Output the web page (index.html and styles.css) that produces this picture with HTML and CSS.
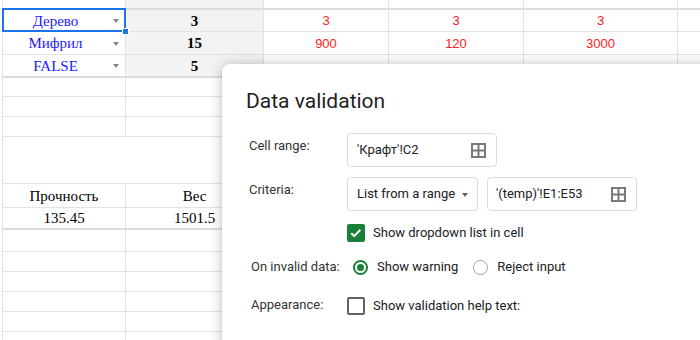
FILE: index.html
```html
<!DOCTYPE html>
<html>
<head>
<meta charset="utf-8">
<link rel="stylesheet" href="styles.css">
</head>
<body>
<div class="screen">
  <div class="sheet">
    <div class="c t"></div><div class="c t g"></div><div class="c t"></div><div class="c t"></div><div class="c t"></div><div class="c t"></div>

    <div class="c dd sel"><span class="val blue">Дерево</span><span class="arrow"></span><span class="handle"></span></div>
    <div class="c g b">3</div><div class="c red">3</div><div class="c red">3</div><div class="c red">3</div><div class="c"></div>

    <div class="c dd"><span class="val blue">Мифрил</span><span class="arrow"></span></div>
    <div class="c g b">15</div><div class="c red">900</div><div class="c red">120</div><div class="c red">3000</div><div class="c"></div>

    <div class="c dd t"><span class="val blue">FALSE</span><span class="arrow"></span></div>
    <div class="c g b t">5</div><div class="c t"></div><div class="c t"></div><div class="c t"></div><div class="c t"></div>

    <div class="c"></div><div class="c"></div><div class="c"></div><div class="c"></div><div class="c"></div><div class="c"></div>
    <div class="c"></div><div class="c"></div><div class="c"></div><div class="c"></div><div class="c"></div><div class="c"></div>
    <div class="c"></div><div class="c"></div><div class="c"></div><div class="c"></div><div class="c"></div><div class="c"></div>

    <div class="c n"></div><div class="c n"></div><div class="c n"></div><div class="c n"></div><div class="c n"></div><div class="c n"></div>

    <div class="c">Прочность</div><div class="c">Вес</div><div class="c"></div><div class="c"></div><div class="c"></div><div class="c"></div>
    <div class="c t">135.45</div><div class="c t">1501.5</div><div class="c t"></div><div class="c t"></div><div class="c t"></div><div class="c t"></div>

    <div class="c"></div><div class="c"></div><div class="c"></div><div class="c"></div><div class="c"></div><div class="c"></div>
    <div class="c"></div><div class="c"></div><div class="c"></div><div class="c"></div><div class="c"></div><div class="c"></div>
    <div class="c"></div><div class="c"></div><div class="c"></div><div class="c"></div><div class="c"></div><div class="c"></div>
    <div class="c"></div><div class="c"></div><div class="c"></div><div class="c"></div><div class="c"></div><div class="c"></div>
    <div class="c"></div><div class="c"></div><div class="c"></div><div class="c"></div><div class="c"></div><div class="c"></div>
    <div class="c"></div><div class="c"></div><div class="c"></div><div class="c"></div><div class="c"></div><div class="c"></div>
  </div>

  <div class="dialog">
    <div class="title">Data validation</div>
    <div class="form">
      <div class="label">Cell range:</div>
      <div class="ctrl">
        <div class="input w150">
          <span>'Крафт'!C2</span>
          <svg class="gicon" viewBox="0 0 15 15"><path fill-rule="evenodd" d="M0 0H15V15H0Z M2 2V6.5H6.5V2Z M8.5 2V6.5H13V2Z M2 8.5V13H6.5V8.5Z M8.5 8.5V13H13V8.5Z"/></svg>
        </div>
      </div>

      <div class="label r2">Criteria:</div>
      <div class="ctrl r2 pair">
        <div class="input sel-box">
          <span>List from a range</span>
          <span class="darrow"></span>
        </div>
        <div class="input w150 range">
          <span>'(temp)'!E1:E53</span>
          <svg class="gicon" viewBox="0 0 15 15"><path fill-rule="evenodd" d="M0 0H15V15H0Z M2 2V6.5H6.5V2Z M8.5 2V6.5H13V2Z M2 8.5V13H6.5V8.5Z M8.5 8.5V13H13V8.5Z"/></svg>
        </div>
      </div>

      <div class="label r3"></div>
      <div class="ctrl r3 opt">
        <span class="cb on"><svg viewBox="0 0 14 14"><path d="M2.3 7.2l2.9 2.9 6.1-6.3"/></svg></span>
        <span>Show dropdown list in cell</span>
      </div>

      <div class="label r4 ind">On invalid data:</div>
      <div class="ctrl r4 opt">
        <span class="rwrap"><span class="radio on"></span></span>
        <span>Show warning</span>
        <span class="rwrap second"><span class="radio"></span></span>
        <span>Reject input</span>
      </div>

      <div class="label r5 ind">Appearance:</div>
      <div class="ctrl r5 opt">
        <span class="cb"></span>
        <span>Show validation help text:</span>
      </div>
    </div>
  </div>
</div>
</body>
</html>
```
FILE: styles.css
```css
* { box-sizing: border-box; }
html, body { margin: 0; padding: 0; background: #fff; }
.screen {
  position: relative;
  width: 700px;
  height: 340px;
  overflow: hidden;
}
.sheet {
  margin-left: 2px;
  border-left: 1px solid #e2e2e2;
  display: grid;
  grid-template-columns: 123px 138px 125px 135px 154px 40px;
  grid-template-rows: 10px 22px 23px 23px 19px 20px 20px 47px 24px 22px 22px 20px 20px 20px 20px 20px;
  font-family: "Liberation Serif", "Times New Roman", serif;
  font-size: 15px;
  color: #000;
}
.c {
  border-right: 1px solid #e2e2e2;
  border-bottom: 1px solid #e2e2e2;
  display: flex;
  align-items: center;
  justify-content: center;
  line-height: 16px;
  white-space: nowrap;
  position: relative;
}
.c.t { border-bottom: 2px solid #dcdcdc; }
.c.n { border-right-color: transparent; }
.c.g { background: #f3f3f3; }
.c.b { font-weight: bold; }
.c.red {
  color: #ff1a1a;
  font-family: "Liberation Sans", Arial, sans-serif;
  font-size: 13px;
  padding-top: 1px;
}
.dd { justify-content: flex-start; }
.dd .val { flex: 1; text-align: center; }
.blue { color: #1a1aff; }
.arrow {
  width: 0; height: 0;
  border-left: 3.5px solid transparent;
  border-right: 3.5px solid transparent;
  border-top: 4px solid #858585;
  margin: 1px 6px 0 5px;
}
.sel::after {
  content: "";
  position: absolute;
  top: -2px; left: -1px; right: -1px; bottom: -1px;
  border: 2px solid #1a73e8;
  pointer-events: none;
}
.handle {
  position: absolute;
  right: -4px; bottom: -4px;
  width: 7px; height: 7px;
  background: #1a73e8;
  border: 1px solid #fff;
  z-index: 2;
}

.dialog {
  position: absolute;
  left: 222px;
  top: 64px;
  width: 520px;
  height: 320px;
  background: #fff;
  border-radius: 8px;
  box-shadow: 0 0 14px rgba(0, 0, 0, 0.22), 0 1px 3px rgba(0, 0, 0, 0.12);
  padding: 25px 0 0 24px;
  font-family: Roboto, "Noto Sans", sans-serif;
  font-size: 13px;
  color: #202124;
}
.title {
  font-size: 21px;
  line-height: 24px;
  color: #1f1f1f;
  margin-bottom: 20px;
}
.form {
  display: grid;
  grid-template-columns: 101px auto;
  align-items: start;
}
.label {
  padding-left: 3px;
  padding-top: 5px;
  line-height: 16px;
  color: #333;
  white-space: nowrap;
}
.label.ind { padding-left: 5px; }
.ctrl { display: flex; align-items: center; }
.r2 { margin-top: 10px; }
.r3 { margin-top: 12px; }
.r4 { margin-top: 14px; }
.r5 { margin-top: 19px; }
.r4.label { padding-top: 2px; }
.r5.label { padding-top: 1px; }
.input {
  height: 34px;
  border: 1px solid #dadce0;
  border-radius: 4px;
  display: flex;
  align-items: center;
  justify-content: space-between;
  padding: 0 10px 0 9px;
  line-height: 16px;
  color: #202124;
  white-space: nowrap;
}
.w150 { width: 150px; }
.range { padding-left: 8px; }
.pair { gap: 9px; }
.sel-box { width: 131px; padding-right: 9px; }
.darrow {
  width: 0; height: 0;
  border-left: 3.5px solid transparent;
  border-right: 3.5px solid transparent;
  border-top: 4px solid #5f6368;
  margin-top: 1px;
}
.gicon { width: 15px; height: 15px; fill: #7a7a7a; flex: none; }
.opt { line-height: 20px; color: #202124; white-space: nowrap; }
.cb {
  width: 18px; height: 18px;
  border: 2px solid #5f6368;
  border-radius: 2px;
  margin-right: 8px;
  flex: none;
  display: flex;
}
.cb.on { background: #188038; border-color: #188038; }
.cb svg { width: 14px; height: 14px; }
.cb path { fill: none; stroke: #fff; stroke-width: 2; }
.rwrap {
  width: 20px; height: 20px;
  margin: 0 7px 0 3px;
  display: flex;
  align-items: center;
  justify-content: center;
  flex: none;
}
.rwrap.second { margin-left: 12px; }
.radio {
  width: 15px; height: 15px;
  border-radius: 50%;
  border: 1.5px solid #a3a3a3;
  display: flex;
  align-items: center;
  justify-content: center;
}
.radio.on { border: 2px solid #188038; }
.radio.on::after {
  content: "";
  width: 7px; height: 7px;
  border-radius: 50%;
  background: #188038;
}
```
